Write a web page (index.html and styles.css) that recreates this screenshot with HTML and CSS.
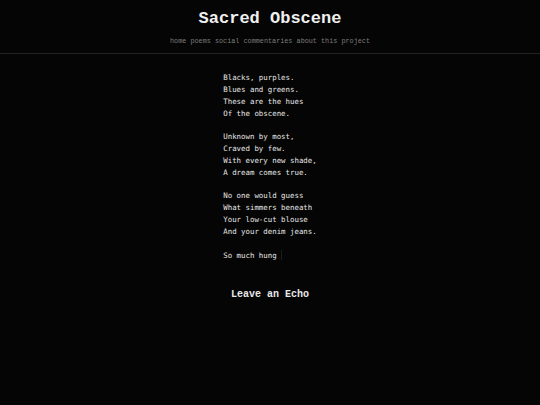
FILE: index.html
```
<!DOCTYPE html>
<html>
<head>
<meta charset="utf-8">
<link rel="stylesheet" href="styles.css">
</head>
<body>
<header class="site-header">
  <h1 class="site-title">Sacred Obscene</h1>
  <nav class="site-nav">
    <a href="#">home</a>
    <a href="#">poems</a>
    <a href="#">social commentaries</a>
    <a href="#">about this project</a>
  </nav>
</header>
<main class="content">
  <div class="poem"><p class="stanza">Blacks, purples.
Blues and greens.
These are the hues
Of the obscene.</p><p class="stanza">Unknown by most,
Craved by few.
With every new shade,
A dream comes true.</p><p class="stanza">No one would guess
What simmers beneath
Your low-cut blouse
And your denim jeans.</p><p class="stanza">So much hung<span class="cursor"></span></p></div>
  <h2 class="echo">Leave an Echo</h2>
</main>
</body>
</html>
```
FILE: styles.css
```
html, body {
  margin: 0;
  padding: 0;
  background: #050505;
}
body {
  width: 540px;
  height: 405px;
  font-family: "Liberation Mono", "DejaVu Sans Mono", monospace;
  color: #e8e8e8;
}
.site-header {
  text-align: center;
  border-bottom: 1px solid #222;
  padding-top: 9px;
  height: 44px;
}
.site-title {
  margin: 0;
  font-family: "Liberation Mono", monospace;
  font-size: 17px;
  line-height: 20px;
  font-weight: bold;
  color: #f0f0f0;
}
.site-nav {
  margin-top: 8px;
  font-size: 6.8px;
  line-height: 8px;
}
.site-nav a {
  color: #7c7c7c;
  text-decoration: none;
}
.content {
  display: flex;
  flex-direction: column;
  align-items: center;
  padding-top: 18px;
}
.poem {
  font-family: "DejaVu Sans Mono", monospace;
  font-size: 7.4px;
  line-height: 11.85px;
  color: #e6e6e6;
}
.stanza {
  margin: 0 0 11.85px 0;
  white-space: pre;
}
.cursor {
  display: inline-block;
  width: 1px;
  height: 10px;
  margin-left: 4px;
  vertical-align: -2px;
  background: #16201f;
}
.echo {
  margin: 16px 0 0 0;
  font-family: "Liberation Mono", monospace;
  font-size: 10px;
  line-height: 12px;
  font-weight: bold;
  color: #e8e8e8;
}
```
